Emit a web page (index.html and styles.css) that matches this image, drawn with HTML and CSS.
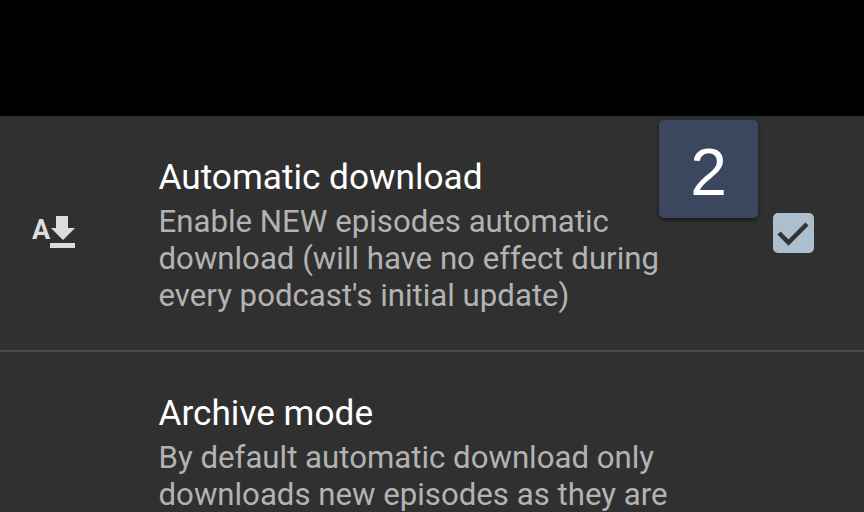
FILE: index.html
```html
<!DOCTYPE html>
<html lang="en">
<head>
    <meta charset="UTF-8">
    <meta name="viewport" content="width=device-width, initial-scale=1.0">
    <title>Settings</title>
    <link rel="stylesheet" href="styles.css">
</head>
<body>
    <div class="status-bar"></div>
    <div class="settings">
        <div class="row row-first">
            <div class="row-icon">
                <svg width="46" height="36" viewBox="0 0 46 36">
                    <text x="1" y="25" class="icon-letter">A</text>
                    <path d="M25 2h12v12h7L32 26 20 14h5z" fill="#dcdcdc"/>
                    <rect x="19" y="29" width="25" height="5" fill="#dcdcdc"/>
                </svg>
            </div>
            <div class="row-text">
                <div class="row-title">Automatic download</div>
                <div class="row-desc">Enable NEW episodes automatic download (will have no effect during every podcast's initial update)</div>
            </div>
            <div class="row-check">
                <span class="checkbox">
                    <svg width="41" height="40" viewBox="0 0 41 40">
                        <path d="M6 20l9.500 9.500L34 11" fill="none" stroke="#333" stroke-width="4.500"/>
                    </svg>
                </span>
            </div>
            <div class="badge">2</div>
        </div>
        <div class="row">
            <div class="row-icon"></div>
            <div class="row-text">
                <div class="row-title">Archive mode</div>
                <div class="row-desc">By default automatic download only downloads new episodes as they are</div>
            </div>
        </div>
    </div>
</body>
</html>
```

FILE: styles.css
```css
html, body { margin: 0; padding: 0; }
body { width: 864px; height: 512px; overflow: hidden; background: #000; font-family: Roboto, sans-serif; }
.status-bar { height: 116px; background: #000; }
.settings { background: #303030; height: 396px; }
.row { position: relative; display: flex; padding-top: 41px; }
.row-first { height: 236px; box-sizing: border-box; border-bottom: 2px solid #4a4a4a; }
.row-icon { width: 158.5px; flex: none; display: flex; padding: 57px 0 0 31px; box-sizing: border-box; }
.row-text { width: 510px; flex: none; }
.row-title { font-size: 35.2px; line-height: 40px; color: #fff; }
.row-desc { font-size: 31.2px; line-height: 37px; color: #b3b3b3; margin-top: 6px; }
.row-check { flex: none; padding: 56px 0 0 104.5px; }
.checkbox { display: block; width: 41px; height: 40px; border-radius: 5px; background: #adbfcf; }
.icon-letter { font-family: Roboto, sans-serif; font-size: 27px; font-weight: 700; fill: #dcdcdc; }
.badge { position: absolute; left: 659px; top: 4px; width: 99px; height: 98px; border-radius: 5px; background: #3b475e; color: #fff; font-family: "Liberation Sans", sans-serif; font-size: 66px; line-height: 104px; text-align: center; box-shadow: 0 2px 4px rgba(0,0,0,.5); }
```
